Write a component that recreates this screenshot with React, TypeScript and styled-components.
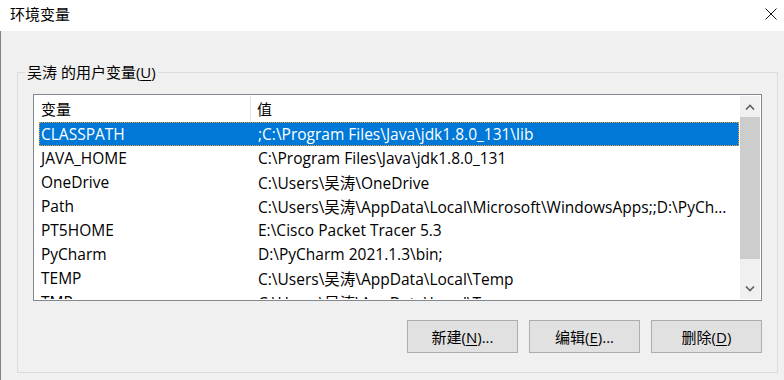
import React from "react";
import styled, { createGlobalStyle } from "styled-components";

const Global = createGlobalStyle`
  html, body { margin: 0; padding: 0; }
  body {
    width: 784px;
    height: 380px;
    overflow: hidden;
    background: #f0f0f0;
    font-family: "Open Sans", "Noto Sans CJK SC", sans-serif;
    font-size: 15px;
    color: #000;
  }
`;

const Window = styled.div`
  width: 784px;
  height: 380px;
  display: flex;
  flex-direction: column;
`;

const TitleBar = styled.div`
  height: 31px;
  flex: none;
  background: #fff;
  display: flex;
  align-items: center;
  justify-content: space-between;
  padding: 0 7px 4px 10px;
  box-sizing: border-box;
`;

const TitleText = styled.span`
  font-size: 15px;
  line-height: 20px;
`;

const Body = styled.div`
  flex: 1;
  border-left: 1px solid #7d848c;
  padding: 31px 6px 0 16px;
  box-sizing: border-box;
`;

const Group = styled.fieldset`
  margin: 0;
  border: 1px solid #dcdcdc;
  padding: 12px 15px 19px 15px;
  display: flex;
  flex-direction: column;
`;

const Legend = styled.legend`
  margin-left: -8px;
  padding: 0 2px;
  font-size: 15px;
  line-height: 20px;
`;

const U = styled.span`
  text-decoration: underline;
  text-underline-offset: 2px;
`;

const List = styled.div`
  height: 207px;
  box-sizing: border-box;
  border: 1px solid #828790;
  background: #fff;
  padding: 1px;
  display: flex;
`;

const Content = styled.div`
  flex: 1;
  overflow: hidden;
  display: flex;
  flex-direction: column;
`;

const Header = styled.div`
  height: 26px;
  flex: none;
  display: flex;
  align-items: stretch;
`;

const HeadCell = styled.div<{ $w?: number }>`
  ${(p) => (p.$w ? `width: ${p.$w}px; flex: none; border-right: 1px solid #e5e5e5;` : "flex: 1;")}
  box-sizing: border-box;
  padding-left: 6px;
  display: flex;
  align-items: center;
  line-height: 20px;
`;

const Rows = styled.div`
  display: flex;
  flex-direction: column;
  padding-left: 4px;
  padding-right: 1px;
  font-size: 15.5px;
`;

const Row = styled.div<{ $selected?: boolean }>`
  height: 24px;
  flex: none;
  box-sizing: border-box;
  display: flex;
  align-items: center;
  white-space: nowrap;
  background: ${(p) => (p.$selected ? "#0078d7" : "transparent")};
  color: ${(p) => (p.$selected ? "#fff" : "#000")};
  border: 1px dotted ${(p) => (p.$selected ? "#f29b3a" : "transparent")};
`;

const NameCell = styled.div`
  width: 216px;
  flex: none;
  padding-left: 1px;
  box-sizing: border-box;
  overflow: hidden;
`;

const ValueCell = styled.div`
  flex: 1;
  min-width: 0;
  padding-left: 2px;
  overflow: hidden;
  text-overflow: ellipsis;
`;

const ScrollBar = styled.div`
  width: 20px;
  flex: none;
  background: #f0f0f0;
  display: flex;
  flex-direction: column;
`;

const ArrowBtn = styled.div`
  height: 21px;
  flex: none;
  display: flex;
  align-items: center;
  justify-content: center;
`;

const Thumb = styled.div`
  height: 142px;
  flex: none;
  background: #cdcdcd;
`;

const Track = styled.div`
  flex: 1;
`;

const Buttons = styled.div`
  display: flex;
  justify-content: flex-end;
  gap: 11px;
  margin-top: 19px;
`;

const Button = styled.button`
  width: 111px;
  height: 33px;
  box-sizing: border-box;
  background: #e1e1e1;
  border: 1px solid #adadad;
  font-family: inherit;
  font-size: 15px;
  color: #000;
  padding: 0;
  margin: 0;
  line-height: 20px;
`;

const Chevron = ({ up }: { up?: boolean }) => (
  <svg width="10" height="6" viewBox="0 0 10 6">
    <path
      d={up ? "M1 5.5 L5 1.5 L9 5.5" : "M1 0.5 L5 4.5 L9 0.5"}
      fill="none"
      stroke="#606060"
      strokeWidth="1.6"
    />
  </svg>
);

const rows: [string, string][] = [
  ["CLASSPATH", ";C:\\Program Files\\Java\\jdk1.8.0_131\\lib"],
  ["JAVA_HOME", "C:\\Program Files\\Java\\jdk1.8.0_131"],
  ["OneDrive", "C:\\Users\\吴涛\\OneDrive"],
  ["Path", "C:\\Users\\吴涛\\AppData\\Local\\Microsoft\\WindowsApps;;D:\\PyCh..."],
  ["PT5HOME", "E:\\Cisco Packet Tracer 5.3"],
  ["PyCharm", "D:\\PyCharm 2021.1.3\\bin;"],
  ["TEMP", "C:\\Users\\吴涛\\AppData\\Local\\Temp"],
  ["TMP", "C:\\Users\\吴涛\\AppData\\Local\\Temp"],
];

export default function App() {
  return (
    <Window>
      <Global />
      <TitleBar>
        <TitleText>环境变量</TitleText>
        <svg width="12" height="12" viewBox="0 0 12 12">
          <path d="M0.5 0.5 L11.5 11.5 M11.5 0.5 L0.5 11.5" stroke="#111" strokeWidth="1" />
        </svg>
      </TitleBar>
      <Body>
        <Group>
          <Legend>
            吴涛 的用户变量(<U>U</U>)
          </Legend>
          <List>
            <Content>
              <Header>
                <HeadCell $w={216}>变量</HeadCell>
                <HeadCell>值</HeadCell>
              </Header>
              <Rows>
                {rows.map(([n, v], i) => (
                  <Row key={n} $selected={i === 0}>
                    <NameCell>{n}</NameCell>
                    <ValueCell>{v}</ValueCell>
                  </Row>
                ))}
              </Rows>
            </Content>
            <ScrollBar>
              <ArrowBtn>
                <Chevron up />
              </ArrowBtn>
              <Thumb />
              <Track />
              <ArrowBtn>
                <Chevron />
              </ArrowBtn>
            </ScrollBar>
          </List>
          <Buttons>
            <Button>
              新建(<U>N</U>)...
            </Button>
            <Button>
              编辑(<U>E</U>)...
            </Button>
            <Button>
              删除(<U>D</U>)
            </Button>
          </Buttons>
        </Group>
      </Body>
    </Window>
  );
}
